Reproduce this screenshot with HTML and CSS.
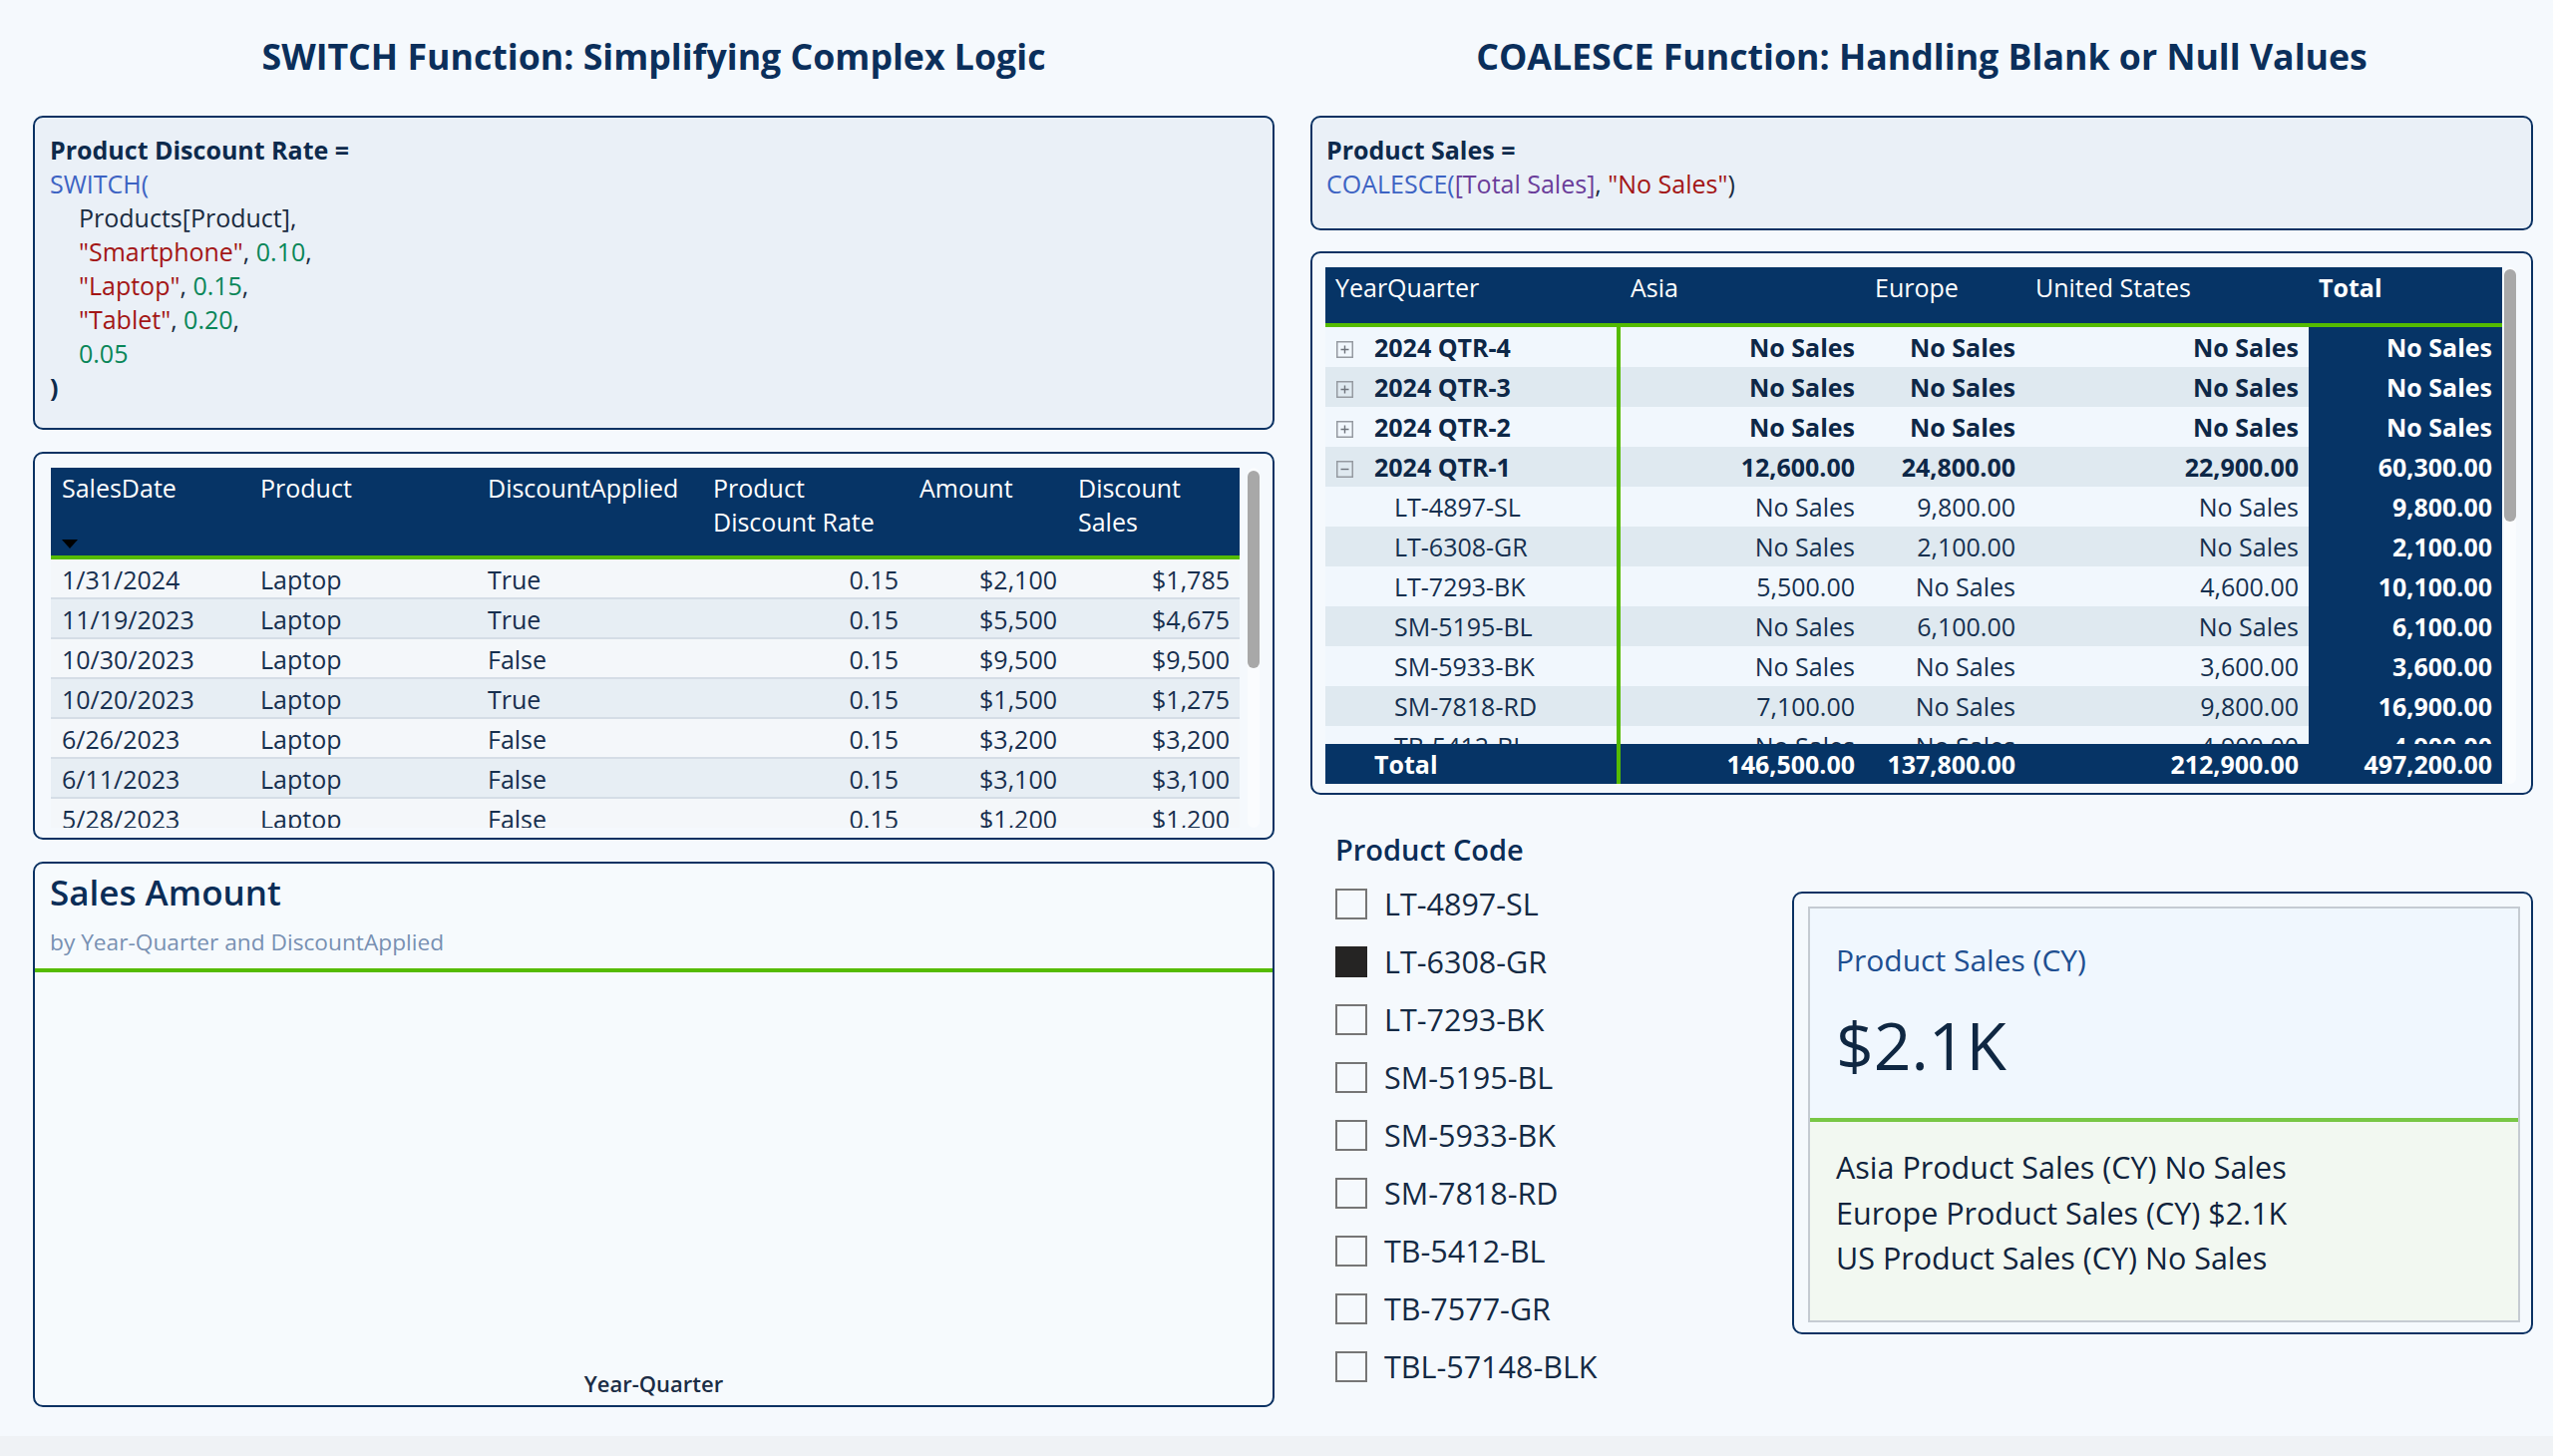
FILE: index.html
```html
<!DOCTYPE html>
<html lang="en">
<head>
<meta charset="utf-8">
<title>SWITCH and COALESCE</title>
<link rel="stylesheet" href="styles.css">
</head>
<body>
<div class="page">
  <div class="col col-left">
    <h1 class="title">SWITCH Function: Simplifying Complex Logic</h1>
    <div class="box code-box switch-box">
      <div class="b">Product Discount Rate =</div>
      <div><span class="fn">SWITCH(</span></div>
      <div class="ind">Products[Product],</div>
      <div class="ind"><span class="str">"Smartphone"</span>, <span class="num">0.10</span>,</div>
      <div class="ind"><span class="str">"Laptop"</span>, <span class="num">0.15</span>,</div>
      <div class="ind"><span class="str">"Tablet"</span>, <span class="num">0.20</span>,</div>
      <div class="ind"><span class="num">0.05</span></div>
      <div class="b">)</div>
    </div>

    <div class="box table-box">
      <div class="tview">
        <div class="trow thead">
          <div class="c">SalesDate<span class="sort"></span></div>
          <div class="c">Product</div>
          <div class="c">DiscountApplied</div>
          <div class="c">Product<br>Discount Rate</div>
          <div class="c">Amount</div>
          <div class="c">Discount<br>Sales</div>
        </div>
        <div class="trow tr odd"><div class="c">1/31/2024</div><div class="c">Laptop</div><div class="c">True</div><div class="c r">0.15</div><div class="c r">$2,100</div><div class="c r">$1,785</div></div>
        <div class="trow tr even"><div class="c">11/19/2023</div><div class="c">Laptop</div><div class="c">True</div><div class="c r">0.15</div><div class="c r">$5,500</div><div class="c r">$4,675</div></div>
        <div class="trow tr odd"><div class="c">10/30/2023</div><div class="c">Laptop</div><div class="c">False</div><div class="c r">0.15</div><div class="c r">$9,500</div><div class="c r">$9,500</div></div>
        <div class="trow tr even"><div class="c">10/20/2023</div><div class="c">Laptop</div><div class="c">True</div><div class="c r">0.15</div><div class="c r">$1,500</div><div class="c r">$1,275</div></div>
        <div class="trow tr odd"><div class="c">6/26/2023</div><div class="c">Laptop</div><div class="c">False</div><div class="c r">0.15</div><div class="c r">$3,200</div><div class="c r">$3,200</div></div>
        <div class="trow tr even"><div class="c">6/11/2023</div><div class="c">Laptop</div><div class="c">False</div><div class="c r">0.15</div><div class="c r">$3,100</div><div class="c r">$3,100</div></div>
        <div class="trow tr odd"><div class="c">5/28/2023</div><div class="c">Laptop</div><div class="c">False</div><div class="c r">0.15</div><div class="c r">$1,200</div><div class="c r">$1,200</div></div>
      </div>
      <div class="vscroll t-scroll"><div class="thumb"></div></div>
    </div>

    <div class="box chart-box">
      <div class="chart-head">
        <div class="chart-title">Sales Amount</div>
        <div class="chart-sub">by Year-Quarter and DiscountApplied</div>
      </div>
      <div class="chart-body">
        <div class="axis-label">Year-Quarter</div>
      </div>
    </div>
  </div>

  <div class="col col-right">
    <h1 class="title">COALESCE Function: Handling Blank or Null Values</h1>
    <div class="box code-box coalesce-box">
      <div class="b">Product Sales =</div>
      <div><span class="fn">COALESCE(</span><span class="ref">[Total Sales]</span>, <span class="str">"No Sales"</span>)</div>
    </div>

    <div class="box matrix-box">
      <div class="mview">
        <div class="mrow mhead">
          <div class="mc">YearQuarter</div>
          <div class="mc">Asia</div>
          <div class="mc">Europe</div>
          <div class="mc">United States</div>
          <div class="mc b">Total</div>
        </div>
        <div class="mbody">
          <div class="mrow m odd bold"><div class="mc first"><svg class="exp" width="17" height="17" viewBox="0 0 17 17"><rect x="0.75" y="0.75" width="15.5" height="15.5" fill="none" stroke="#959aa1" stroke-width="1.5"/><path d="M4.5 8.5h8M8.5 4.5v8" stroke="#6e737b" stroke-width="1.4"/></svg>2024 QTR-4</div><div class="mc r">No Sales</div><div class="mc r">No Sales</div><div class="mc r">No Sales</div><div class="mc r tot">No Sales</div></div>
          <div class="mrow m even bold"><div class="mc first"><svg class="exp" width="17" height="17" viewBox="0 0 17 17"><rect x="0.75" y="0.75" width="15.5" height="15.5" fill="none" stroke="#959aa1" stroke-width="1.5"/><path d="M4.5 8.5h8M8.5 4.5v8" stroke="#6e737b" stroke-width="1.4"/></svg>2024 QTR-3</div><div class="mc r">No Sales</div><div class="mc r">No Sales</div><div class="mc r">No Sales</div><div class="mc r tot">No Sales</div></div>
          <div class="mrow m odd bold"><div class="mc first"><svg class="exp" width="17" height="17" viewBox="0 0 17 17"><rect x="0.75" y="0.75" width="15.5" height="15.5" fill="none" stroke="#959aa1" stroke-width="1.5"/><path d="M4.5 8.5h8M8.5 4.5v8" stroke="#6e737b" stroke-width="1.4"/></svg>2024 QTR-2</div><div class="mc r">No Sales</div><div class="mc r">No Sales</div><div class="mc r">No Sales</div><div class="mc r tot">No Sales</div></div>
          <div class="mrow m even bold"><div class="mc first"><svg class="exp" width="17" height="17" viewBox="0 0 17 17"><rect x="0.75" y="0.75" width="15.5" height="15.5" fill="none" stroke="#959aa1" stroke-width="1.5"/><path d="M4.5 8.5h8" stroke="#6e737b" stroke-width="1.4"/></svg>2024 QTR-1</div><div class="mc r">12,600.00</div><div class="mc r">24,800.00</div><div class="mc r">22,900.00</div><div class="mc r tot">60,300.00</div></div>
          <div class="mrow m odd"><div class="mc first child">LT-4897-SL</div><div class="mc r">No Sales</div><div class="mc r">9,800.00</div><div class="mc r">No Sales</div><div class="mc r tot">9,800.00</div></div>
          <div class="mrow m even"><div class="mc first child">LT-6308-GR</div><div class="mc r">No Sales</div><div class="mc r">2,100.00</div><div class="mc r">No Sales</div><div class="mc r tot">2,100.00</div></div>
          <div class="mrow m odd"><div class="mc first child">LT-7293-BK</div><div class="mc r">5,500.00</div><div class="mc r">No Sales</div><div class="mc r">4,600.00</div><div class="mc r tot">10,100.00</div></div>
          <div class="mrow m even"><div class="mc first child">SM-5195-BL</div><div class="mc r">No Sales</div><div class="mc r">6,100.00</div><div class="mc r">No Sales</div><div class="mc r tot">6,100.00</div></div>
          <div class="mrow m odd"><div class="mc first child">SM-5933-BK</div><div class="mc r">No Sales</div><div class="mc r">No Sales</div><div class="mc r">3,600.00</div><div class="mc r tot">3,600.00</div></div>
          <div class="mrow m even"><div class="mc first child">SM-7818-RD</div><div class="mc r">7,100.00</div><div class="mc r">No Sales</div><div class="mc r">9,800.00</div><div class="mc r tot">16,900.00</div></div>
          <div class="mrow m odd"><div class="mc first child">TB-5412-BL</div><div class="mc r">No Sales</div><div class="mc r">No Sales</div><div class="mc r">4,900.00</div><div class="mc r tot">4,900.00</div></div>
        </div>
        <div class="mrow mtotal">
          <div class="mc first totlabel">Total</div>
          <div class="mc r">146,500.00</div>
          <div class="mc r">137,800.00</div>
          <div class="mc r">212,900.00</div>
          <div class="mc r">497,200.00</div>
        </div>
      </div>
      <div class="vscroll m-scroll"><div class="thumb"></div></div>
    </div>

    <div class="lower">
      <div class="slicer">
        <div class="slicer-title">Product Code</div>
        <div class="slicer-list">
          <div class="item"><span class="cb"></span><span class="lbl">LT-4897-SL</span></div>
          <div class="item"><span class="cb on"></span><span class="lbl">LT-6308-GR</span></div>
          <div class="item"><span class="cb"></span><span class="lbl">LT-7293-BK</span></div>
          <div class="item"><span class="cb"></span><span class="lbl">SM-5195-BL</span></div>
          <div class="item"><span class="cb"></span><span class="lbl">SM-5933-BK</span></div>
          <div class="item"><span class="cb"></span><span class="lbl">SM-7818-RD</span></div>
          <div class="item"><span class="cb"></span><span class="lbl">TB-5412-BL</span></div>
          <div class="item"><span class="cb"></span><span class="lbl">TB-7577-GR</span></div>
          <div class="item"><span class="cb"></span><span class="lbl">TBL-57148-BLK</span></div>
        </div>
      </div>
      <div class="kpi-card">
        <div class="kpi-inner">
          <div class="kpi-top">
            <div class="kpi-label">Product Sales (CY)</div>
            <div class="kpi-value">$2.1K</div>
          </div>
          <div class="kpi-bottom">
            <div>Asia Product Sales (CY) No Sales</div>
            <div>Europe Product Sales (CY) $2.1K</div>
            <div>US Product Sales (CY) No Sales</div>
          </div>
        </div>
      </div>
    </div>
  </div>
</div>
</body>
</html>
```

FILE: styles.css
```css
* { box-sizing: border-box; }
html, body { margin: 0; padding: 0; }
body {
  width: 2560px;
  height: 1460px;
  overflow: hidden;
  background: #eff2f5;
  font-family: "Open Sans", "Noto Sans", sans-serif;
  color: #15304f;
}
.page {
  width: 2560px;
  height: 1440px;
  background: #f5f9fd;
  display: flex;
  padding-left: 33px;
  gap: 36px;
}
.col { display: flex; flex-direction: column; }
.col-left { width: 1245px; }
.col-right { width: 1226px; }

.title {
  margin: 0;
  height: 116px;
  padding-top: 31px;
  font-size: 35.7px;
  line-height: 50px;
  font-weight: 700;
  color: #0b2f5b;
  text-align: center;
}
.box {
  border: 2px solid #0b3263;
  border-radius: 10px;
}

/* code blocks */
.code-box {
  background: #eaf0f7;
  padding: 15px 15px 0 15px;
  font-size: 25px;
  line-height: 34px;
  color: #1a2b40;
}
.code-box .b { font-weight: 700; color: #0d2a4c; }
.ind { padding-left: 29px; }
.fn { color: #3d63c3; }
.str { color: #a31515; }
.num { color: #098658; }
.ref { color: #6a3d9a; }
.switch-box { height: 315px; }
.coalesce-box { height: 115px; padding-left: 14px; }

/* table */
.table-box {
  height: 389px;
  margin-top: 22px;
  padding: 14px 13px 10px 16px;
  display: flex;
  gap: 8px;
}
.tview { width: 1192px; height: 361px; overflow: hidden; }
.trow {
  display: grid;
  grid-template-columns: 199px 228px 226px 207px 159px 173px;
  font-size: 25px;
  line-height: 34px;
}
.trow .c { padding: 0 10px 0 11px; white-space: nowrap; }
.trow .r { text-align: right; }
.thead {
  height: 92px;
  background: #063466;
  color: #ffffff;
  border-bottom: 4px solid #55bb00;
}
.thead .c { padding-top: 3px; position: relative; }
.sort {
  position: absolute;
  left: 11px;
  top: 72px;
  width: 0;
  height: 0;
  border-left: 8.5px solid transparent;
  border-right: 8.5px solid transparent;
  border-top: 9px solid #000000;
}
.tr { height: 40px; border-bottom: 2px solid #d5dde6; color: #172f4e; }
.tr .c { padding-top: 3px; }
.tr.odd { background: #f4f7fa; }
.tr.even { background: #e7eef4; }

.vscroll {
  width: 12px;
  background: #fafcfe;
  border-radius: 6px;
}
.thumb { background: #a8a8a8; border-radius: 6px; }
.t-scroll { height: 361px; }
.t-scroll .thumb { margin-top: 3px; height: 198px; }

/* chart */
.chart-box {
  height: 547px;
  margin-top: 22px;
  display: flex;
  flex-direction: column;
  background: #f6fafd;
}
.chart-head {
  height: 109px;
  padding: 9px 15px 0 15px;
  border-bottom: 4px solid #55bb00;
}
.chart-title {
  font-size: 35px;
  line-height: 40px;
  font-weight: 600;
  color: #0b2d57;
}
.chart-sub {
  margin-top: 15px;
  font-size: 22.7px;
  line-height: 30px;
  color: #7890b2;
}
.chart-body {
  flex: 1;
  display: flex;
  align-items: flex-end;
  justify-content: center;
  padding-bottom: 7px;
}
.axis-label {
  font-size: 22px;
  line-height: 30px;
  font-weight: 600;
  color: #1b2d45;
}

/* matrix */
.matrix-box {
  height: 545px;
  margin-top: 21px;
  padding: 14px 15px 9px 13px;
  display: flex;
  gap: 2px;
}
.mview { width: 1180px; height: 518px; display: flex; flex-direction: column; }
.mrow {
  display: grid;
  grid-template-columns: 296px 245px 161px 284px 194px;
  font-size: 25px;
  white-space: nowrap;
}
.mc { padding: 0 10px; }
.mc.r { text-align: right; }
.mhead {
  height: 60px;
  background: #063466;
  color: #ffffff;
  border-bottom: 4px solid #55bb00;
  line-height: 34px;
}
.mhead .mc { padding-top: 3px; }
.mhead .b { font-weight: 700; }
.mbody { height: 418px; overflow: hidden; }
.m { height: 40px; line-height: 40px; color: #15304f; }
.m.odd { background: #f1f7fd; }
.m.even { background: #dfe9f0; }
.m.bold { font-weight: 700; color: #0d2747; }
.first { border-right: 4px solid #55bb00; }
.m .first { display: flex; align-items: flex-start; padding-left: 11px; }
.exp { flex: none; margin-top: 14px; margin-right: 21px; }
.m .child { padding-left: 69px; }
.m .tot { background: #063466; color: #ffffff; font-weight: 700; }
.mtotal {
  height: 40px;
  line-height: 40px;
  background: #063466;
  color: #ffffff;
  font-weight: 700;
}
.totlabel { padding-left: 49px; }
.m-scroll { height: 518px; }
.m-scroll .thumb { margin-top: 2px; height: 253px; }

/* slicer + card */
.lower { display: flex; }
.slicer { width: 483px; padding-left: 25px; padding-top: 35px; }
.slicer-title {
  font-size: 29px;
  line-height: 40px;
  font-weight: 600;
  color: #0b2d57;
}
.slicer-list { margin-top: 5px; }
.item {
  height: 58px;
  display: flex;
  align-items: center;
  gap: 17px;
}
.cb {
  width: 32px;
  height: 31px;
  border: 2px solid #767676;
  flex: none;
}
.cb.on { background: #252423; border-color: #252423; }
.lbl {
  font-size: 30.5px;
  line-height: 40px;
  color: #142a44;
}
.kpi-card {
  margin-top: 97px;
  width: 743px;
  height: 444px;
  border: 2px solid #0b3263;
  border-radius: 10px;
  padding: 13px 11px 10px 14px;
}
.kpi-inner {
  height: 100%;
  border: 2px solid #c5cbd2;
  display: flex;
  flex-direction: column;
}
.kpi-top {
  height: 210px;
  background: #f0f7fe;
  padding: 32px 0 0 26px;
}
.kpi-label {
  font-size: 30px;
  line-height: 40px;
  color: #1e4f91;
}
.kpi-value {
  margin-top: 24px;
  font-size: 66px;
  line-height: 80px;
  color: #0f2742;
}
.kpi-bottom {
  flex: 1;
  background: #f2f8f1;
  border-top: 4px solid #78c745;
  padding: 23px 0 0 26px;
  font-size: 30.5px;
  line-height: 45.5px;
  color: #10233c;
}
```
